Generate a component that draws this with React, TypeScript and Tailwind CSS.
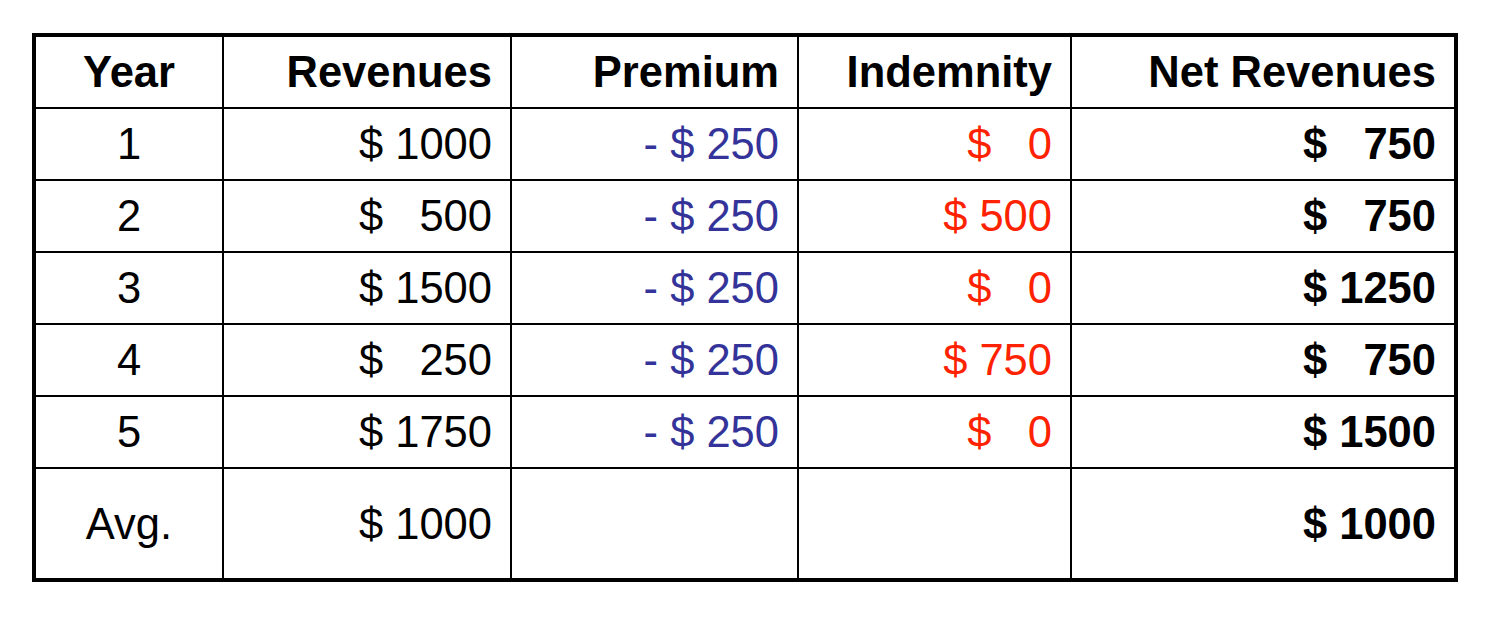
import React from 'react';

type Row = {
  year: string;
  revenue: string;
  premium: string;
  indemnity: string;
  net: string;
  tall?: boolean;
};

const rows: Row[] = [
  { year: '1', revenue: '$ 1000', premium: '- $ 250', indemnity: '$   0', net: '$   750' },
  { year: '2', revenue: '$   500', premium: '- $ 250', indemnity: '$ 500', net: '$   750' },
  { year: '3', revenue: '$ 1500', premium: '- $ 250', indemnity: '$   0', net: '$ 1250' },
  { year: '4', revenue: '$   250', premium: '- $ 250', indemnity: '$ 750', net: '$   750' },
  { year: '5', revenue: '$ 1750', premium: '- $ 250', indemnity: '$   0', net: '$ 1500' },
  { year: 'Avg.', revenue: '$ 1000', premium: '', indemnity: '', net: '$ 1000', tall: true },
];

const cell = 'flex items-center border-black whitespace-pre pt-[2px]';

export default function App() {
  return (
    <div
      className="w-[1494px] h-[618px] bg-white pt-[33px] pl-[32px] text-black text-[43.5px] leading-none"
      style={{ fontFamily: '"Liberation Sans", Arial, sans-serif' }}
    >
      <div className="w-[1426px] border-4 border-black grid grid-cols-[188px_288px_287px_273px_1fr] grid-rows-[72px_repeat(5,72px)_109px]">
        <div className={`${cell} justify-center border-r-2 border-b-2 font-bold`}>Year</div>
        <div className={`${cell} justify-end pr-[18px] border-r-2 border-b-2 font-bold`}>Revenues</div>
        <div className={`${cell} justify-end pr-[18px] border-r-2 border-b-2 font-bold`}>Premium</div>
        <div className={`${cell} justify-end pr-[18px] border-r-2 border-b-2 font-bold`}>Indemnity</div>
        <div className={`${cell} justify-end pr-[18px] border-b-2 font-bold`}>Net Revenues</div>

        {rows.map((r) => {
          const b = r.tall ? '' : 'border-b-2';
          return (
            <React.Fragment key={r.year}>
              <div className={`${cell} justify-center border-r-2 ${b}`}>{r.year}</div>
              <div className={`${cell} justify-end pr-[18px] border-r-2 ${b}`}>{r.revenue}</div>
              <div className={`${cell} justify-end pr-[18px] border-r-2 ${b} text-[#333399]`}>{r.premium}</div>
              <div className={`${cell} justify-end pr-[18px] border-r-2 ${b} text-[#ff2200]`}>{r.indemnity}</div>
              <div className={`${cell} justify-end pr-[18px] ${b} font-bold`}>{r.net}</div>
            </React.Fragment>
          );
        })}
      </div>
    </div>
  );
}
